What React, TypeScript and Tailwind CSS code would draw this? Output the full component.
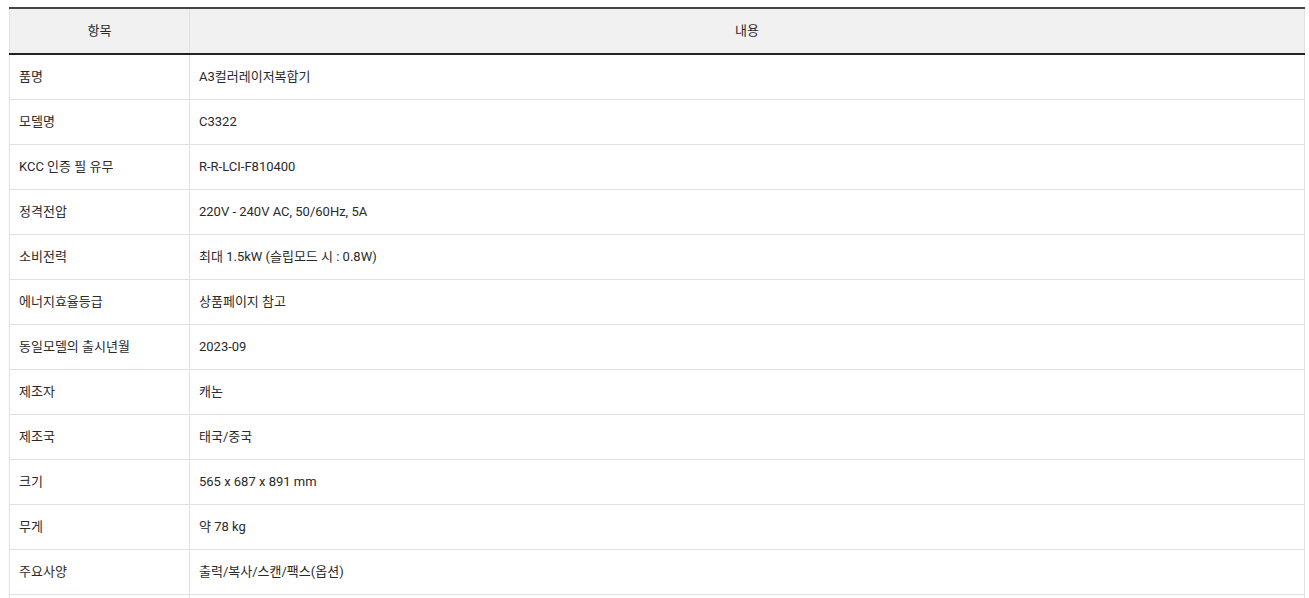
import React from "react";

const rows: [string, string][] = [
  ["품명", "A3컬러레이저복합기"],
  ["모델명", "C3322"],
  ["KCC 인증 필 유무", "R-R-LCI-F810400"],
  ["정격전압", "220V - 240V AC, 50/60Hz, 5A"],
  ["소비전력", "최대 1.5kW (슬립모드 시 : 0.8W)"],
  ["에너지효율등급", "상품페이지 참고"],
  ["동일모델의 출시년월", "2023-09"],
  ["제조자", "캐논"],
  ["제조국", "태국/중국"],
  ["크기", "565 x 687 x 891 mm"],
  ["무게", "약 78 kg"],
  ["주요사양", "출력/복사/스캔/팩스(옵션)"],
  ["", ""],
];

export default function App() {
  return (
    <div
      className="bg-white w-[1309px] h-[598px] overflow-hidden pt-[7px] pl-[9px]"
      style={{ fontFamily: 'Roboto, "Noto Sans CJK KR", sans-serif' }}
    >
      <table className="w-[1296px] border-collapse text-[13px] text-[#2a2a2a]">
        <thead>
          <tr className="bg-[#f1f1f1] border-t-2 border-t-[#444] border-b-2 border-b-[#222]">
            <th className="w-[180px] h-[46px] font-normal text-center border-x border-[#e0e0e0]">항목</th>
            <th className="h-[46px] font-normal text-center border-x border-[#e0e0e0]">내용</th>
          </tr>
        </thead>
        <tbody>
          {rows.map(([k, v], i) => (
            <tr key={i} className="border-b border-[#e0e0e0]">
              <td className="h-[45px] pl-[9px] border-x border-[#e0e0e0]">{k}</td>
              <td className="h-[45px] pl-[9px] border-x border-[#e0e0e0]">{v}</td>
            </tr>
          ))}
        </tbody>
      </table>
    </div>
  );
}
